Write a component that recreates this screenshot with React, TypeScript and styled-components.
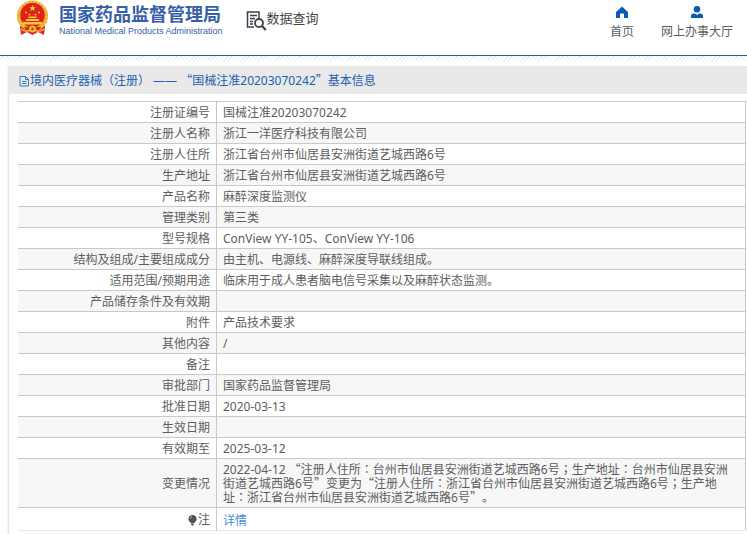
import React from "react";
import styled, { createGlobalStyle } from "styled-components";

const GlobalStyle = createGlobalStyle`
  body {
    margin: 0;
    background: #fff;
    color: #5c5d61;
    font: 12px/14px "Noto Sans", "Noto Sans CJK SC", sans-serif;
    text-spacing-trim: space-all;
    overflow: hidden;
  }
  a { text-decoration: none; }
`;

const Header = styled.header`
  display: flex;
  align-items: flex-start;
  height: 55px;
  box-sizing: border-box;
  padding: 0 14px 0 16px;
`;

const Brand = styled.a`
  display: flex;
  gap: 10px;
  color: #3560a9;
`;

const BrandText = styled.span`
  display: flex;
  flex-direction: column;
  padding-top: 4px;
`;

const BrandName = styled.strong`
  font: 700 18px/18px "Noto Sans CJK SC", sans-serif;
  white-space: nowrap;
`;

const BrandSub = styled.span`
  font: 9px/18px "Liberation Sans", sans-serif;
  white-space: nowrap;
`;

const Section = styled.a`
  display: flex;
  align-items: flex-start;
  margin: 10px 0 0 23px;
  color: #444549;
  font: 13px/16px "Noto Sans CJK SC", sans-serif;
  white-space: nowrap;
`;

const Nav = styled.nav`
  display: flex;
  gap: 27px;
  margin: 5px 0 0 auto;
`;

const NavLink = styled.a`
  display: flex;
  flex-direction: column;
  align-items: center;
  gap: 4px;
  color: #5c5d61;
  line-height: 18px;
  white-space: nowrap;
`;

const Hatch = styled.div`
  height: 10px;
  border-top: 1px solid #1a5fa0;
  background: linear-gradient(to bottom, transparent, #fff 7px),
    repeating-linear-gradient(135deg, #fff 0 2px, #e4e4e4 2px 3px);
`;

const Panel = styled.main`
  margin-left: 8px;
  border-left: 1px solid #e9e9e9;
  box-shadow: -1px 0 1px #f6f6f6;
  padding-bottom: 12px;
`;

const PanelTitle = styled.h1`
  display: flex;
  align-items: center;
  box-sizing: border-box;
  height: 28px;
  margin: 0 0 7px;
  padding: 2px 0 0 10px;
  background: #e9e9ea;
  color: #2060b0;
  font-size: 12px;
  font-weight: 400;
  white-space: pre;
`;

const TableWrap = styled.div`
  padding: 0 1px 0 9px;
`;

const Table = styled.table`
  width: 100%;
  table-layout: fixed;
  border-collapse: collapse;
  border-right: 1px solid #c8c9cc;
`;

const Row = styled.tr`
  border-top: 1px solid #c8c9cc;
  &:nth-child(even) { background: #f7f7f7; }
  &:last-child { border-bottom: 1px solid #e6e7e9; }
`;

const Label = styled.th`
  width: 186px;
  padding: 4px 6px 2px;
  border-right: 1px solid #c8c9cc;
  font-weight: 400;
  text-align: right;
`;

const Value = styled.td<{ $tall?: boolean }>`
  height: 14px;
  padding: ${(p) => (p.$tall ? "6px 6px 2px" : "4px 6px 2px")};
`;

const DetailLink = styled.a`
  color: #3d8edb;
`;

const FullQuote = styled.span`
  font-family: "Noto Sans CJK SC", sans-serif;
  line-height: 0;
`;

const CenteredMark = styled.span`
  font-family: "Noto Sans CJK TC", sans-serif;
  line-height: 0;
`;

const NoteLabel = styled.span`
  display: inline-flex;
  align-items: center;
  vertical-align: top;
`;

function Chinese({ text }: { text: string }) {
  return (
    <span>
      {text.split(/([“”]|[：；])/).map((part, i) => {
        if (/^[“”]$/.test(part)) return <FullQuote key={i}>{part}</FullQuote>;
        if (/^[：；]$/.test(part)) return <CenteredMark key={i} lang="zh-TW">{part}</CenteredMark>;
        return part;
      })}
    </span>
  );
}

const Emblem = () => (
  <svg width="33" height="36" viewBox="0 0 33 36" aria-hidden="true">
    <path d="M4 26 5 35l6-3 5.500 3 5.500-3 6 3 1-9z" fill="#d92b1c" />
    <circle cx="16.500" cy="16" r="15.500" fill="#e9a72c" />
    <circle cx="16.500" cy="16" r="14" fill="none" stroke="#f6cc55" strokeWidth="1.500" strokeDasharray="2 1.500" />
    <circle cx="16.500" cy="15" r="12.200" fill="#df2118" />
    <path d="m16.500 5 .9 2.200 2.400.1-1.900 1.500.7 2.300-2.100-1.300-2.100 1.300.7-2.300-1.900-1.500 2.400-.1z" fill="#fbd44b" />
    <g fill="#f9c940">
      <circle cx="10" cy="12.500" r="1" /><circle cx="13.500" cy="14.500" r="1" />
      <circle cx="19.500" cy="14.500" r="1" /><circle cx="23" cy="12.500" r="1" />
      <path d="m12 18 1-1.500h7l1 1.500zM10.500 19h12l1 2h-14zM7 22h19v2.500H7z" />
    </g>
    <path d="M8 27h17l-2 3H10z" fill="#d92b1c" />
    <circle cx="16.500" cy="29" r="3.500" fill="#f3bb39" />
    <circle cx="16.500" cy="29" r="1.300" fill="#d92b1c" />
    <path d="M5 29q5 4 9 1M28 29q-5 4-9 1" fill="none" stroke="#f3bb39" strokeWidth="1.200" />
  </svg>
);

const SearchDoc = () => (
  <svg width="21" height="21" viewBox="0 0 21 21" fill="none" stroke="#3e3f4a" aria-hidden="true">
    <path d="M8 17H1.500V2h11.500v6" strokeWidth="1.500" />
    <path d="M4 5.500h7M4 8.500h5M4 11.500h3M4 14h3" strokeWidth="1.300" />
    <circle cx="13" cy="13" r="4" strokeWidth="1.800" />
    <path d="m16 16 3.800 4" strokeWidth="2.200" />
  </svg>
);

const HomeIcon = () => (
  <svg width="14" height="14" viewBox="0 0 14 14" fill="#0b5bb5" aria-hidden="true">
    <path d="M7 1.500 13 7v6H9V9.500q0-1-1-1H6q-1 0-1 1V13H1V7z" />
  </svg>
);

const PersonIcon = () => (
  <svg width="14" height="14" viewBox="0 0 14 14" fill="#0b5bb5" aria-hidden="true">
    <circle cx="7" cy="4.300" r="3.300" />
    <path d="M1 13v-2q0-2.500 3-2.500h1L7 10l2-1.500h1q3 0 3 2.500v2z" />
  </svg>
);

const PageIcon = () => (
  <svg width="11" height="12" viewBox="0 0 11 12" fill="none" stroke="#3f74bb" aria-hidden="true">
    <path d="M1 1.500h5.500l3 3V11H1zM6.500 1.500v3h3M3 6.500h4.500M3 8.500h4.500" />
  </svg>
);

const BulbIcon = () => (
  <svg width="11" height="12" viewBox="0 0 11 12" aria-hidden="true">
    <path d="M5.500 1a4 4 0 0 1 2.300 7.300L7 9.500H4l-.8-1.200A4 4 0 0 1 5.500 1zM4 10h3l-.7 1.500H4.700z" fill="#505156" />
    <path d="M3.200 4.500q.3-1.500 1.800-2" fill="none" stroke="#ddd" strokeWidth=".8" />
  </svg>
);

const rows: [string, string][] = [
  ["注册证编号", "国械注准20203070242"],
  ["注册人名称", "浙江一洋医疗科技有限公司"],
  ["注册人住所", "浙江省台州市仙居县安洲街道艺城西路6号"],
  ["生产地址", "浙江省台州市仙居县安洲街道艺城西路6号"],
  ["产品名称", "麻醉深度监测仪"],
  ["管理类别", "第三类"],
  ["型号规格", "ConView YY-105、ConView YY-106"],
  ["结构及组成/主要组成成分", "由主机、电源线、麻醉深度导联线组成。"],
  ["适用范围/预期用途", "临床用于成人患者脑电信号采集以及麻醉状态监测。"],
  ["产品储存条件及有效期", ""],
  ["附件", "产品技术要求"],
  ["其他内容", "/"],
  ["备注", ""],
  ["审批部门", "国家药品监督管理局"],
  ["批准日期", "2020-03-13"],
  ["生效日期", ""],
  ["有效期至", "2025-03-12"],
  [
    "变更情况",
    "2022-04-12 “注册人住所：台州市仙居县安洲街道艺城西路6号；生产地址：台州市仙居县安洲街道艺城西路6号”变更为“注册人住所：浙江省台州市仙居县安洲街道艺城西路6号；生产地址：浙江省台州市仙居县安洲街道艺城西路6号”。",
  ],
];

export default function App() {
  return (
    <div lang="zh-CN">
      <GlobalStyle />
      <Header>
        <Brand href="#">
          <Emblem />
          <BrandText>
            <BrandName>国家药品监督管理局</BrandName>
            <BrandSub>National Medical Products Administration</BrandSub>
          </BrandText>
        </Brand>
        <Section href="#query">
          <SearchDoc />
          数据查询
        </Section>
        <Nav>
          <NavLink href="#home"><HomeIcon />首页</NavLink>
          <NavLink href="#hall"><PersonIcon />网上办事大厅</NavLink>
        </Nav>
      </Header>
      <Hatch />
      <Panel>
        <PanelTitle>
          <PageIcon />
          <Chinese text="境内医疗器械（注册） —— “国械注准20203070242”基本信息" />
        </PanelTitle>
        <TableWrap>
          <Table>
            <tbody>
              {rows.map(([label, value]) => (
                <Row key={label}>
                  <Label scope="row">{label}</Label>
                  <Value><Chinese text={value} /></Value>
                </Row>
              ))}
              <Row>
                <Label scope="row"><NoteLabel><BulbIcon />注</NoteLabel></Label>
                <Value $tall><DetailLink href="#detail">详情</DetailLink></Value>
              </Row>
            </tbody>
          </Table>
        </TableWrap>
      </Panel>
    </div>
  );
}
